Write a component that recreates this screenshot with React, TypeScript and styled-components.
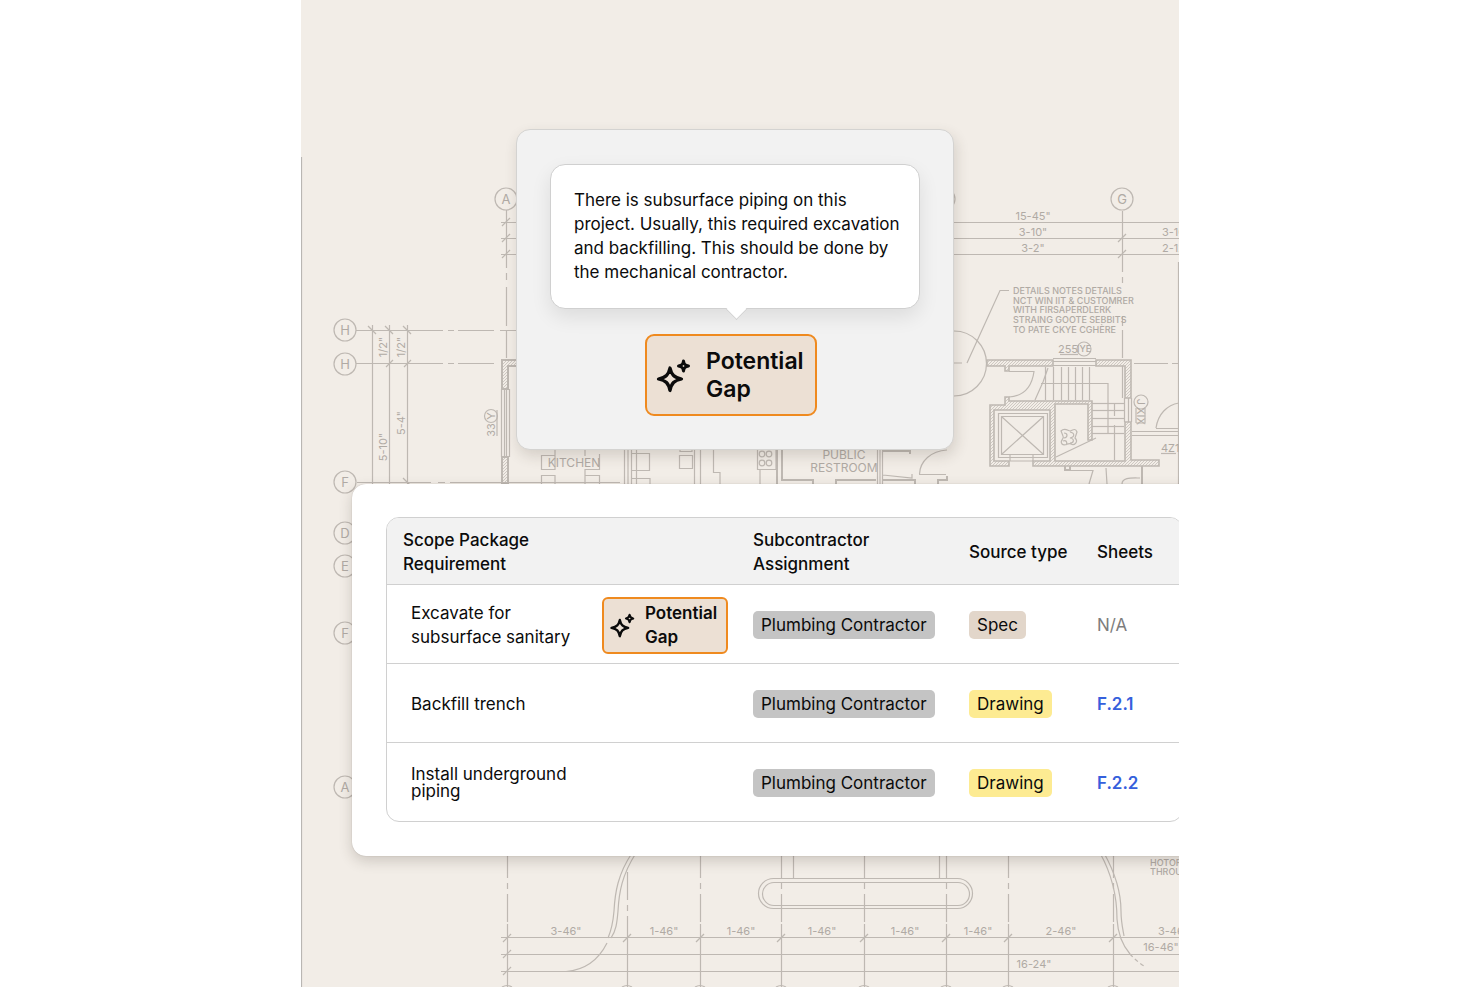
import React from "react";
import styled, { createGlobalStyle } from "styled-components";

const GlobalStyle = createGlobalStyle`
  *, *::before, *::after { box-sizing: border-box; }
  body {
    margin: 0;
    background: #fff;
    color: #0b0b0b;
    font-family: Inter, "Liberation Sans", sans-serif;
    font-size: 17px;
    line-height: 24px;
  }
`;

const Stage = styled.main`
  position: relative;
  display: flex;
  flex-direction: column;
  gap: 34px;
  width: 100%;
  max-width: 878px;
  min-height: 100vh;
  margin: 0 auto;
  padding: 129px 0;
  overflow: hidden;
  background: #f2ede7;
`;

const Drawing = styled.svg`
  position: absolute;
  inset: 0;
  width: 100%;
  height: 100%;
  fill: none;
  stroke: #beb8b2;
  stroke-width: 1.2;

  text {
    fill: #b0aaa4;
    stroke: none;
    font-family: Inter, sans-serif;
    font-size: 11px;
    text-anchor: middle;
  }
  .room { font-size: 12px; }
  .grid { font-size: 13px; }
  .note { font-size: 9px; font-weight: 500; text-anchor: start; }
  .start { text-anchor: start; }
`;

const Callout = styled.section`
  position: relative;
  display: flex;
  flex-direction: column;
  align-items: center;
  gap: 25px;
  width: 438px;
  margin-left: 215px;
  padding: 34px 33px 33px;
  border: 1px solid #d4d3d1;
  border-radius: 14px;
  background: #f2f2f2;
  box-shadow: 2px 6px 14px rgba(60, 50, 40, 0.16);
`;

const Bubble = styled.p`
  position: relative;
  align-self: stretch;
  margin: 0;
  padding: 23px 16px 24px 23px;
  border: 1px solid #d0d0d0;
  border-radius: 15px;
  background: #fff;
  box-shadow: 0 8px 20px rgba(0, 0, 0, 0.09);

  &::after {
    content: "";
    position: absolute;
    left: 50%;
    bottom: -9px;
    width: 15px;
    height: 15px;
    margin-left: -6px;
    border: solid #d0d0d0;
    border-width: 0 1px 1px 0;
    background: #fff;
    transform: rotate(45deg);
  }
`;

const GapButton = styled.button<{ $large?: boolean }>`
  display: flex;
  align-items: center;
  gap: ${(p) => (p.$large ? 15 : 10)}px;
  flex: none;
  width: ${(p) => (p.$large ? 172 : 126)}px;
  height: ${(p) => (p.$large ? 82 : 57)}px;
  margin: ${(p) => (p.$large ? "0 8px 0 0" : "0")};
  padding: 0 0 0 ${(p) => (p.$large ? 8 : 5)}px;
  border: 2px solid #ef8a1f;
  border-radius: ${(p) => (p.$large ? 9 : 6)}px;
  background: #ece0d4;
  color: #0b0b0b;
  font: 600 ${(p) => (p.$large ? "23px/28px" : "17px/24px")} Inter, sans-serif;
  text-align: left;
`;

const SparkleSvg = styled.svg<{ $size: number }>`
  flex: none;
  width: ${(p) => p.$size}px;
  height: ${(p) => p.$size}px;
  fill: none;
  stroke: currentColor;
  stroke-linejoin: round;
`;

const Panel = styled.section`
  position: relative;
  margin: 0 -38px 0 51px;
  padding: 33px 34px 34px;
  border-radius: 14px;
  background: #fff;
  box-shadow: 0 5px 14px rgba(60, 50, 40, 0.2), 0 0 1px rgba(60, 50, 40, 0.35);
`;

const TableFrame = styled.div`
  overflow: hidden;
  border: 1px solid #d0d0d0;
  border-radius: 13px;
`;

const Table = styled.table`
  width: 100%;
  table-layout: fixed;
  border-spacing: 0;

  tbody tr:last-child td { height: 78px; border-bottom: 0; }
`;

const Col = styled.col<{ $width?: number }>`
  width: ${(p) => (p.$width ? `${p.$width}px` : "auto")};
`;

const Head = styled.th`
  height: 67px;
  padding: 2px 0 0 16px;
  border-bottom: 1px solid #d0d0d0;
  background: #f2f2f2;
  font-weight: 500;
  text-align: left;
`;

const Cell = styled.td`
  height: 79px;
  padding: 2px 0 0 16px;
  border-bottom: 1px solid #d0d0d0;
`;

const Requirement = styled.div<{ $tight?: boolean }>`
  display: flex;
  align-items: center;
  justify-content: space-between;
  padding: 0 9px 0 8px;
  line-height: ${(p) => (p.$tight ? 17 : 24)}px;
`;

const tones = { grey: "#c4c4c4", tan: "#e2d6ca", yellow: "#fdeb92" };

const Tag = styled.span<{ $tone: keyof typeof tones }>`
  display: inline-block;
  padding: 2px 8px;
  border-radius: 5px;
  background: ${(p) => tones[p.$tone]};
  white-space: nowrap;
`;

const Missing = styled.span`
  color: #7d7d7d;
`;

const SheetLink = styled.a`
  color: #3560dc;
  font-weight: 600;
  text-decoration: none;
`;

const Sparkles = ({ size }: { size: number }) => (
  <SparkleSvg $size={size} viewBox="0 0 36 36" aria-hidden="true">
    <path strokeWidth="3.3" d="M15 11 C16.6 18 19 20.4 26.500 22 C19 23.6 16.6 26 15 33.500 C13.4 26 11 23.6 3.500 22 C11 20.4 13.4 18 15 11Z" />
    <path strokeWidth="3" d="M28.5 4 C29 7.4 30.1 8.5 33.5 9 C30.1 9.5 29 10.6 28.5 14 C28 10.6 26.9 9.5 23.5 9 C26.9 8.5 28 7.4 28.5 4Z" />
  </SparkleSvg>
);

const PotentialGap = ({ large }: { large?: boolean }) => (
  <GapButton type="button" $large={large}>
    <Sparkles size={large ? 36 : 26} />
    <span>Potential<br />Gap</span>
  </GapButton>
);

const Marker = ({ x, y, label }: { x: number; y: number; label: string }) => (
  <g>
    <circle cx={x} cy={y} r="11" />
    <text className="grid" x={x} y={y + 5}>{label}</text>
  </g>
);

const Tick = ({ x, y }: { x: number; y: number }) => <path d={`M${x - 4} ${y + 4}l8 -8`} />;

const Blueprint = () => (
  <Drawing viewBox="301 0 878 987" preserveAspectRatio="xMidYMin slice" aria-hidden="true">
    <defs>
      <pattern id="hatch" width="3" height="3" patternUnits="userSpaceOnUse">
        <path d="M0 3L3 0" strokeWidth="0.7" />
      </pattern>
    </defs>
    <path stroke="#b9b6b3" d="M301.5 157V987" />

    <Marker x={345} y={330} label="H" />
    <Marker x={345} y={364} label="H" />
    <Marker x={345} y={482} label="F" />
    <Marker x={345} y={533} label="D" />
    <Marker x={345} y={566} label="E" />
    <Marker x={345} y={633} label="F" />
    <Marker x={345} y={787} label="A" />
    <Marker x={506} y={199} label="A" />
    <Marker x={944} y={199} label="F" />
    <Marker x={1122} y={199} label="G" />

    {/* left dimension chains */}
    <path d="M372.500 325V484M389.500 325V484M407.500 325V484M356 330.500H443M448 330.500H454M458 330.500H494M500 330.500H516M356 363.500H443M448 363.500H454M458 363.500H494M357 482.500H431M438 482.500H445M450 482.500H620" />
    {[372, 389, 407].map((x) => <path key={x} d={`M${x - 4} 326l8 8`} />)}
    <path d="M386 367l7 -7M404 367l7 -7M403 478l8 8" />
    <text transform="translate(387 347) rotate(-90)">1/2"</text>
    <text transform="translate(405 347) rotate(-90)">1/2"</text>
    <text transform="translate(405 423) rotate(-90)">5-4"</text>
    <text transform="translate(387 447) rotate(-90)">5-10"</text>
    <text transform="translate(495 430) rotate(-90)">33</text>
    <circle cx="491" cy="416" r="6.500" />
    <text transform="translate(495 416) rotate(-90)">Y</text>
    <path d="M497 410V436" />

    {/* top dimension chains */}
    <path d="M506.500 210V268M506.500 273V280M506.500 287V326M506.500 331V358M501 222.500H517M501 238.500H517M501 254.500H517M953 222.500H1179M953 238.500H1179M953 254.500H1179M1122.500 211V272M1122.500 277V283M1122.500 316V326M1122.500 330V358" />
    {[222, 238, 254].map((y) => <Tick key={y} x={506} y={y} />)}
    <Tick x={1122} y={238} />
    <Tick x={1122} y={254} />
    <text x="1033" y="220">15-45"</text>
    <text x="1033" y="236">3-10"</text>
    <text x="1033" y="252">3-2"</text>
    <text className="start" x="1162" y="236">3-10"</text>
    <text className="start" x="1162" y="252">2-12"</text>
    <path d="M1178.500 262V484" />
    <path d="M1009 290.500H1000L967 363" />
    <text className="note" x="1013" y="294">DETAILS NOTES DETAILS</text>
    <text className="note" x="1013" y="304">NCT WIN IIT &amp; CUSTOMRER</text>
    <text className="note" x="1013" y="313">WITH FIRSAPERDLERK</text>
    <text className="note" x="1013" y="323">STRAING GOOTE SEBBITS</text>
    <text className="note" x="1013" y="333">TO PATE CKYE CGHÈRE</text>

    {/* left exterior wall */}
    <path fill="url(#hatch)" strokeWidth="2" d="M517 360H502V389H508V366H517M502 457H508V484H502Z" />
    <path d="M501.500 389V457M504.500 389V457M506.500 389V457M509.500 389V457" />

    {/* kitchen and restroom */}
    <path d="M555 455.500H541.500V469.500H555V450M585 450V456M599.500 454V469.500H585V475.500H599.500V484M541.500 484V475.500H555V484M585 484V475.500M624.500 450V484M628 450V484M631.500 450V484M636.500 450V484M632 453.500H649.500V470.500H632M632 478.500H650V484M680 450V451.500H692V450M679.500 455.500H692.500V468.500H679.500ZM694.500 450V484M700.500 450V484M713.500 450V472.500H720V484M757.500 450V469.500H776V450M760 484V470M953 363H962" />
    {[762, 769].map((x) => [454, 463].map((y) => <circle key={`${x}-${y}`} cx={x} cy={y} r="2.800" />))}
    <path strokeWidth="2" d="M777 450V484M782 450V480H813V484M836 484V480H876M882 480H915V484M883 451H910V454M938 484V480H947V476" />
    <path d="M877.500 450V484M882.500 450V484M880 450V484M883 475L912 478V474M919.500 474C920 461 931 451 947 450M919 474.500H946" />
    <text className="room" x="574" y="467">KITCHEN</text>
    <text className="room" x="844" y="459">PUBLIC</text>
    <text className="room" x="844" y="472">RESTROOM</text>

    {/* stair and lift core */}
    <path d="M954 331A32 32 0 0 1 954 396" />
    <path fill="url(#hatch)" strokeWidth="1.600" d="M987 360H1053V366H1009V371H1005V366H987ZM1096 360H1131V398H1125V366H1096ZM1125 422H1131V460H1159V466H1033V461H1050V410H994V461H1009V466H990V405H1005V397H1009V401H1092V440H1088V404H1055V461H1125Z" />
    <path d="M1053 358.500H1096M1053 361.500H1096M1053 365.500H1096M998.500 413.500H1047.500V457.500H998.500ZM1001.500 416.500H1043.500V454.500H1001.500ZM1002 417L1043 454M1043 417L1002 454M1010 455V461H1033V455M1009 371.500H1034C1032 386 1025 396 1009 397M1048 368L1043 382L1035 400M1041 383.500H1108V433" />
    {[1045, 1053, 1061, 1068, 1075, 1082, 1089].map((x) => <path key={x} d={`M${x}.5 367V400`} />)}
    {[403, 410, 418, 426, 433].map((y) => <path key={y} d={`M1092 ${y}.5H1124`} />)}
    <path d="M1124.500 398V422M1128.500 398V422M1131.500 398V422M1056 457L1096 438M1114.500 403V416M1114.500 425V460M1122.500 366V398M1134 363.500H1168M1172 363.500H1178M1132 431.500H1179M1132 435.500H1179M1156 428.500H1179M1156 428C1158 414 1167 405 1179 403" />
    <text x="1068" y="353">255</text>
    <circle cx="1084" cy="349" r="7" />
    <text className="note" x="1077" y="352">IYE</text>
    <path d="M1060 354.500H1078" />
    <circle cx="1141" cy="402" r="7" />
    <text transform="translate(1137 402) rotate(90)">J</text>
    <text transform="translate(1137 416) rotate(90)">XIX</text>
    <path d="M1136 408V423M1145 408V423H1136" />
    <path d="M1061 431c4-4 7 0 9 0s5-4 7 1l-2 6c4 4-1 8-4 6s-6 3-9 0c-3-4 3-5 1-8zM1064 433c4 0 4 4 0 5M1070 432c5 1 5 5 0 6c5 1 4 5 0 5M1063 441c3-1 5 1 3 4" />
    <text className="start" x="1161" y="452">4Z1/</text>
    <path d="M1161 453.500H1176" />
    <path strokeWidth="2" d="M1065 466V470H1070V466M1142 466V484" />
    <path d="M1070 470.500H1093L1089 484M1106 468L1107 484M1122 484C1122 477 1132 478 1140 478" />

    {/* lower elevation */}
    <path strokeDasharray="28 5 6 5" d="M507.500 850V924M627.500 872V924M700.500 850V924M781.500 850V924M864.500 850V924M946.500 850V924M1008.500 850V924M1113.500 850V924M793.500 850V878M939.500 850V878" />
    <path d="M507.500 924V987M627.500 924V987M700.500 924V987M781.500 924V987M864.500 924V987M946.500 924V987M1008.500 924V987M1113.500 924V987M501 937.500H1179M501 954.500H1179M501 971.500H1179" />
    {[507, 627, 700, 781, 864, 946, 1008, 1113].map((x) => (
      <g key={x}>
        <Tick x={x} y={938} />
        <path d={`M${x - 5} 987q5 -3 10 0`} />
      </g>
    ))}
    <Tick x={507} y={954} />
    <Tick x={507} y={971} />
    <rect x="758.500" y="878.500" width="214" height="30" rx="15" />
    <rect x="762.500" y="882.500" width="207" height="23" rx="11.500" />
    <path d="M632 853C618 874 615 892 614 911C613 923 611 931 608 938M636 853C622 875 619 892 618 911C617 923 616 931 611 938M607 943C598 961 585 970 566 971.500M1100 853C1115 880 1117 902 1117 919C1118 936 1124 947 1130 954M1104 853C1119 880 1121 898 1121 911C1121 922 1123 930 1124 936" />
    <path strokeDasharray="4 3" d="M1130 954Q1136 961 1144 966" />
    <text x="566" y="935">3-46"</text>
    {[664, 741, 822, 905, 978].map((x) => <text key={x} x={x} y="935">1-46"</text>)}
    <text x="1061" y="935">2-46"</text>
    <text className="start" x="1158" y="935">3-46"</text>
    <text x="1161" y="951">16-46"</text>
    <text x="1034" y="968">16-24"</text>
    <text className="note" x="1150" y="866">HOTOR</text>
    <text className="note" x="1150" y="875">THROUGH</text>
  </Drawing>
);

type Row = {
  lines: string[];
  gap?: boolean;
  tight?: boolean;
  source: string;
  tone: keyof typeof tones;
  sheet?: string;
};

const rows: Row[] = [
  { lines: ["Excavate for", "subsurface sanitary"], gap: true, source: "Spec", tone: "tan" },
  { lines: ["Backfill trench"], source: "Drawing", tone: "yellow", sheet: "F.2.1" },
  { lines: ["Install underground", "piping"], tight: true, source: "Drawing", tone: "yellow", sheet: "F.2.2" },
];

export default function App() {
  return (
    <>
      <GlobalStyle />
      <Stage>
        <Blueprint />
        <Callout>
          <Bubble>
            There is subsurface piping on this<br />
            project. Usually, this required excavation<br />
            and backfilling. This should be done by<br />
            the mechanical contractor.
          </Bubble>
          <PotentialGap large />
        </Callout>
        <Panel>
          <TableFrame>
            <Table>
              <colgroup>
                <Col $width={350} />
                <Col $width={216} />
                <Col $width={128} />
                <Col />
              </colgroup>
              <thead>
                <tr>
                  <Head scope="col">Scope Package<br />Requirement</Head>
                  <Head scope="col">Subcontractor<br />Assignment</Head>
                  <Head scope="col">Source type</Head>
                  <Head scope="col">Sheets</Head>
                </tr>
              </thead>
              <tbody>
                {rows.map((row) => (
                  <tr key={row.lines[0]}>
                    <Cell>
                      <Requirement $tight={row.tight}>
                        <span>
                          {row.lines.map((line, i) => (
                            <React.Fragment key={line}>{i > 0 && <br />}{line}</React.Fragment>
                          ))}
                        </span>
                        {row.gap && <PotentialGap />}
                      </Requirement>
                    </Cell>
                    <Cell><Tag $tone="grey">Plumbing Contractor</Tag></Cell>
                    <Cell><Tag $tone={row.tone}>{row.source}</Tag></Cell>
                    <Cell>
                      {row.sheet ? <SheetLink href={`#${row.sheet}`}>{row.sheet}</SheetLink> : <Missing>N/A</Missing>}
                    </Cell>
                  </tr>
                ))}
              </tbody>
            </Table>
          </TableFrame>
        </Panel>
      </Stage>
    </>
  );
}
